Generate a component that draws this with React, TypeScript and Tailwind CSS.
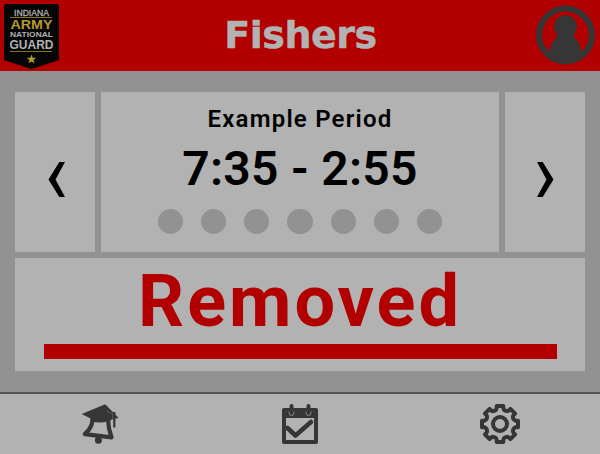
import React from "react";

function GuardBadge() {
  return (
    <svg width="55" height="65" viewBox="0 0 55 65" className="block">
      <path d="M3 0H52Q55 0 55 3V56L27.5 65L0 56V3Q0 0 3 0Z" fill="#050505" />
      <g fontFamily='"Liberation Sans", Arial, sans-serif' fontWeight="700" fill="#b2b2b2">
        <text x="10" y="11.500" fontSize="9.800" fontWeight="400" textLength="35" lengthAdjust="spacingAndGlyphs" stroke="#b2b2b2" strokeWidth="0.300">INDIANA</text>
        <text x="6.500" y="25.400" fontSize="12.400" fill="#b59a2c" textLength="42" lengthAdjust="spacingAndGlyphs">ARMY</text>
        <text x="6" y="33.400" fontSize="7.600" textLength="43" lengthAdjust="spacingAndGlyphs">NATIONAL</text>
        <text x="5.500" y="44.600" fontSize="13" textLength="44" lengthAdjust="spacingAndGlyphs">GUARD</text>
      </g>
      <path d="M6 13.500H48M6 47.500H48" stroke="#8a7420" strokeWidth="1" />
      <path d="M27.500 50.500L28.700 53.700L32.200 53.800L29.500 56L30.500 59.300L27.500 57.400L24.500 59.300L25.500 56L22.800 53.800L26.300 53.700Z" fill="#b59a2c" />
    </svg>
  );
}

function Avatar() {
  return (
    <svg width="60" height="60" viewBox="0 0 60 60" className="block">
      <circle cx="30.500" cy="30" r="26.400" fill="none" stroke="#363636" strokeWidth="6" />
      <circle cx="30.500" cy="21.600" r="11.400" fill="#363636" />
      <path d="M22 28H39V30C38.500 31.500 39 32 40 33C44 37 45.500 41 46.500 46.500C47 47.500 50 46 50 46C44 58 17 58 11 46C11 46 14 47.500 14.500 46.500C15.500 41 17 37 21 33C22 32 22.500 31.500 22 30Z" fill="#363636" />
    </svg>
  );
}

function Chevron({ flip = false }: { flip?: boolean }) {
  return (
    <svg width="17" height="35" viewBox="0 0 17 35" className={flip ? "block -scale-x-100" : "block"}>
      <path d="M11.300 0H17L7.500 17.500L17 35H11.300L0.500 17.500Z" fill="#000" />
    </svg>
  );
}

function BellIcon() {
  return (
    <svg width="40" height="40" viewBox="0 0 40 40" className="block">
      <path d="M12.500 15C12.500 22 9 26.500 4.800 30.200L31.500 33.300C29.500 28 28.300 24 28 15" fill="none" stroke="#363636" strokeWidth="4.200" strokeLinejoin="round" />
      <circle cx="18.400" cy="36.300" r="3.500" fill="#363636" />
      <path d="M1.700 10L24 0.700Q25.500 0.200 26.500 1.500L38.700 14L34 14.800L28.500 17Q20 20 11 17.200L10.500 14.500Z" fill="#363636" />
      <path d="M34.300 8V23.500" stroke="#363636" strokeWidth="2.200" />
      <path d="M27 7.500L32.600 9.500V16" fill="none" stroke="#777" strokeWidth="0.600" />
    </svg>
  );
}

function CalendarIcon() {
  return (
    <svg width="40" height="40" viewBox="0 0 40 40" className="block">
      <path fillRule="evenodd" d="M4 4H36Q38 4 38 6V38Q38 40 36 40H4Q2 40 2 38V6Q2 4 4 4ZM6 14V36H34V14Z" fill="#363636" />
      <path d="M11.500 2V7M28.500 2V7" stroke="#363636" strokeWidth="4" strokeLinecap="round" />
      <path d="M9 7.500V8.500Q9 11.500 11.500 11.500T14 8.500V7.500M26 7.500V8.500Q26 11.500 28.500 11.500T31 8.500V7.500" fill="none" stroke="#999" strokeWidth="0.900" />
      <path d="M7.500 24L15.500 31.500L31 18" fill="none" stroke="#363636" strokeWidth="4.600" strokeLinecap="round" strokeLinejoin="round" />
    </svg>
  );
}

function GearIcon() {
  const tooth = "M15.200 6.400Q16.500 5.800 16.700 4V2H23.300V4Q23.500 5.800 24.800 6.400";
  return (
    <svg width="40" height="40" viewBox="0 0 40 40" className="block">
      <g fill="none" stroke="#363636" strokeWidth="4" strokeLinejoin="round" strokeLinecap="round">
        {[0, 45, 90, 135, 180, 225, 270, 315].map((angle) => (
          <path key={angle} d={tooth} transform={`rotate(${angle} 20 20)`} />
        ))}
        <circle cx="20" cy="20" r="7" />
      </g>
    </svg>
  );
}

export default function App() {
  return (
    <div className="flex h-[454px] w-[600px] flex-col overflow-hidden bg-[#929292] font-[Roboto,'Liberation_Sans',sans-serif] text-black">
      <header className="flex h-[71px] shrink-0 items-start justify-between bg-[#b20000] pl-1 pr-[5px]">
        <div className="w-[60px] pt-1"><GuardBadge /></div>
        <h1 className="pt-[7px] pl-[2px] font-['DejaVu_Sans',sans-serif] text-[38px] leading-[56px] font-bold tracking-[-0.500px] text-[#b2b2b2] [-webkit-text-stroke:0.500px_#b2b2b2]">Fishers</h1>
        <div className="pt-[5px]"><Avatar /></div>
      </header>

      <main className="flex h-[321px] shrink-0 flex-col gap-1.5 px-[15px] pt-[21px]">
        <div className="flex h-40 gap-1.5">
          <button className="flex w-20 items-center justify-center bg-[#b2b2b2] pt-[15px] pl-[2px]"><Chevron /></button>
          <section className="flex flex-1 flex-col items-center bg-[#b2b2b2] pt-3">
            <p className="text-[24px] leading-[30px] font-semibold tracking-[1.200px] whitespace-nowrap">Example Period</p>
            <p className="mt-[5px] text-[48px] leading-[60px] font-semibold tracking-[0.300px] whitespace-nowrap">7:35 - 2:55</p>
            <div className="mt-[10px] flex gap-[17.900px]">
              {[0, 1, 2, 3, 4, 5, 6].map((day) => (
                <span key={day} className="size-[25.300px] rounded-full bg-[#929292]" />
              ))}
            </div>
          </section>
          <button className="flex w-20 items-center justify-center bg-[#b2b2b2] pt-[15px]"><Chevron flip /></button>
        </div>
        <section className="flex h-[113px] flex-col items-center bg-[#b2b2b2]">
          <p className="h-[86px] text-[72px] leading-[88px] font-bold tracking-[3px] text-[#b20000]">Removed</p>
          <div className="h-[15px] w-[513px] bg-[#b20000]" />
        </section>
      </main>

      <nav className="grid h-[62px] shrink-0 grid-cols-3 justify-items-center border-t-2 border-[#555] bg-[#b2b2b2] pt-[10px]">
        <BellIcon />
        <CalendarIcon />
        <GearIcon />
      </nav>
    </div>
  );
}
